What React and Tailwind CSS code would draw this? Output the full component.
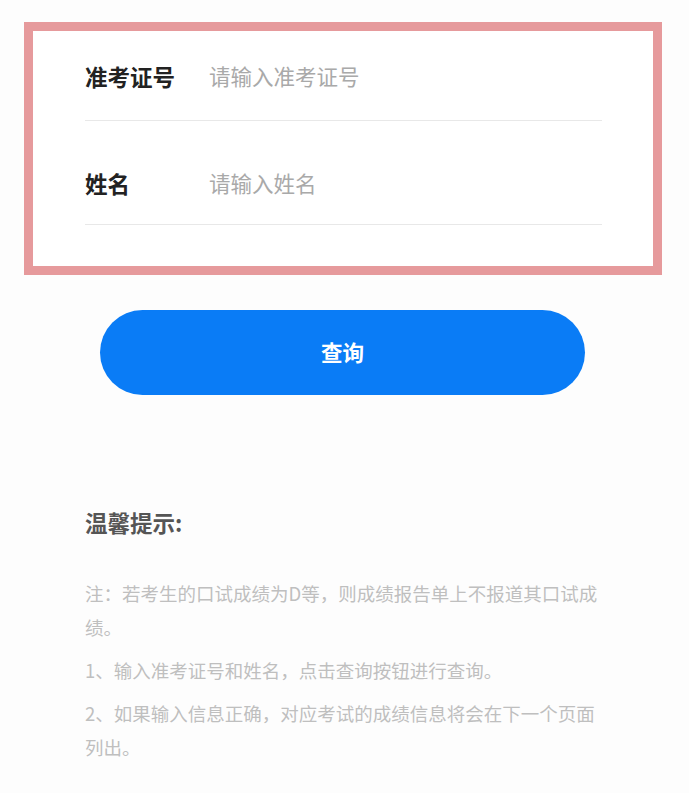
import { useState } from 'react';

const cjk = "font-['Noto_Sans_CJK_SC','Noto_Sans',sans-serif]";

const notes = [
  '注：若考生的口试成绩为D等，则成绩报告单上不报道其口试成绩。',
  '1、输入准考证号和姓名，点击查询按钮进行查询。',
  '2、如果输入信息正确，对应考试的成绩信息将会在下一个页面列出。',
];

function FieldRow({ label, placeholder, value, onChange, className }) {
  return (
    <div className={`flex items-center border-b border-[#e8e8e8] w-[517px] ${className}`}>
      <span className="w-[124px] shrink-0 text-[22.5px] leading-[30px] font-bold text-[#222]">{label}</span>
      <input
        value={value}
        onChange={(event) => onChange(event.target.value)}
        placeholder={placeholder}
        className={`flex-1 min-w-0 bg-transparent outline-none text-[21.5px] leading-[30px] text-[#333] placeholder:text-[#a9a9a9] ${cjk}`}
      />
    </div>
  );
}

export default function App() {
  const [form, setForm] = useState({ ticket: '', name: '' });

  const handleChange = (field, value) => {
    setForm((prev) => ({ ...prev, [field]: value }));
  };

  return (
    <div className={`w-[689px] h-[793px] bg-[#fdfdfd] overflow-hidden pt-[22px] ${cjk}`}>
      {/* highlighted form box */}
      <div className="ml-[24px] w-[638px] h-[253px] border-[9px] border-[#e69a9c] bg-white pl-[52px]">
        <FieldRow
          label="准考证号"
          placeholder="请输入准考证号"
          value={form.ticket}
          onChange={(v) => handleChange('ticket', v)}
          className="pt-[30px] pb-[29px]"
        />
        <FieldRow
          label="姓名"
          placeholder="请输入姓名"
          value={form.name}
          onChange={(v) => handleChange('name', v)}
          className="pt-[47px] pb-[26px]"
        />
      </div>

      <button
        type="button"
        className="mt-[35px] ml-[100px] w-[485px] h-[85px] rounded-full bg-[#0a7cf6] text-white text-[21.5px] font-bold flex items-center justify-center"
      >
        查询
      </button>

      <div className="pl-[85px] mt-[112px]">
        <h2 className="text-[22.5px] leading-[30px] font-semibold text-[#555]">温馨提示:</h2>
        <div className="mt-[39px] w-[518px] space-y-[9px]">
          {notes.map((note) => (
            <p key={note} className="text-[18.5px] leading-[34px] text-[#bfbfbf]">
              {note}
            </p>
          ))}
        </div>
      </div>
    </div>
  );
}
